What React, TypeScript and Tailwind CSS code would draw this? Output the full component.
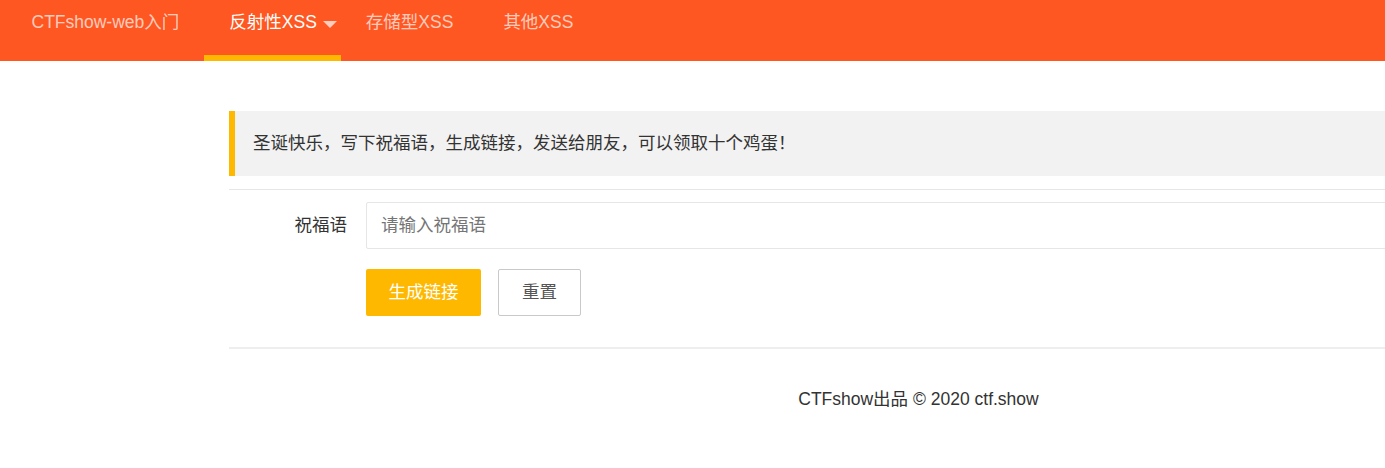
import React from "react";

const navItems = [
  { label: "CTFshow-web入门", active: false, more: false },
  { label: "反射性XSS", active: true, more: true },
  { label: "存储型XSS", active: false, more: false },
  { label: "其他XSS", active: false, more: false },
];

export default function App() {
  return (
    <div className="w-[1385px] h-[468px] overflow-hidden bg-white text-[#333] font-['Liberation_Sans','Noto_Sans_CJK_SC',sans-serif] text-[17.5px]">
      {/* Top nav */}
      <ul className="flex h-[61px] bg-[#FF5722] pl-[6.5px]">
        {navItems.map((item) => (
          <li
            key={item.label}
            className={
              "relative h-full flex items-start pl-[25px] " +
              (item.more ? "pr-[3.5px] " : "pr-[25px] ") +
              (item.active ? "text-white" : "text-white/70")
            }
          >
            <span className="leading-[45px] whitespace-nowrap">{item.label}</span>
            {item.more && (
              <span className="ml-[6.5px] mt-[21px] w-0 h-0 border-l-[7px] border-r-[7px] border-t-[7px] border-l-transparent border-r-transparent border-t-white/70" />
            )}
            {item.active && <span className="absolute left-0 right-0 bottom-0 h-[6px] bg-[#FFB800]" />}
          </li>
        ))}
      </ul>

      {/* Content */}
      <div className="ml-[229px] w-[1379px] mt-[50px]">
        <div className="h-[65px] flex items-center border-l-[6px] border-[#FFB800] bg-[#f2f2f2] pl-[18px] whitespace-nowrap">
          圣诞快乐，写下祝福语，生成链接，发送给朋友，可以领取十个鸡蛋！
        </div>

        <div className="mt-[13px] h-px bg-[#e6e6e6]" />

        <div className="mt-[12px] flex items-center pl-[37px]">
          <label className="w-[100px] pr-[19px] text-right whitespace-nowrap">祝福语</label>
          <input
            type="text"
            placeholder="请输入祝福语"
            className="flex-1 h-[47px] border border-[#e6e6e6] rounded-[2px] pl-[14px] outline-none placeholder:text-[#757575]"
          />
        </div>

        <div className="mt-[20px] flex gap-[17px] pl-[137px]">
          <button className="h-[47px] px-[21.5px] rounded-[2px] border border-transparent bg-[#FFB800] text-white whitespace-nowrap">
            生成链接
          </button>
          <button className="h-[47px] px-[23px] rounded-[2px] border border-[#C9C9C9] bg-white text-[#555] whitespace-nowrap">
            重置
          </button>
        </div>

        <div className="mt-[31px] h-[2px] bg-[#eeeeee]" />

        <div className="mt-[37px] leading-[26px] text-center">CTFshow出品 © 2020 ctf.show</div>
      </div>
    </div>
  );
}
